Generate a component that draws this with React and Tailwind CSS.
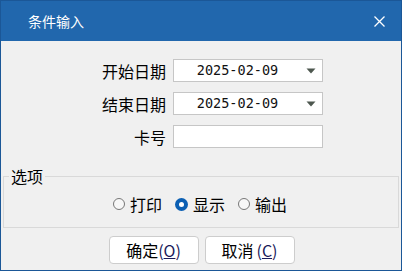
import React, { useState } from "react";

const cjk = { fontFamily: '"Noto Sans CJK SC", "Noto Sans", sans-serif' };
const mono = { fontFamily: '"DejaVu Sans Mono", "Liberation Mono", monospace' };

const Combo = ({ value }) => (
  <div className="flex h-[23px] w-[150px] items-center border border-[#c6c6c6] bg-white">
    <span className="flex-1 pl-[1px] text-center text-[13.5px] text-[#111]" style={mono}>
      {value}
    </span>
    <span className="flex w-[22px] items-center justify-center">
      <svg width="10" height="6" viewBox="0 0 10 6">
        <path d="M0.5 0.5 H9.5 L5 5.5 Z" fill="#4d574f" />
      </svg>
    </span>
  </div>
);

const Radio = ({ checked, label, onClick }) => (
  <label className="flex cursor-pointer items-center gap-[5px]" onClick={onClick}>
    {checked ? (
      <span className="flex h-[13px] w-[13px] items-center justify-center rounded-full bg-[#0b5fb3]">
        <span className="h-[5px] w-[5px] rounded-full bg-white" />
      </span>
    ) : (
      <span className="h-[12px] w-[12px] rounded-full border border-[#777] bg-[#f7f7f7]" />
    )}
    <span className="text-[16px] leading-[20px] text-black">{label}</span>
  </label>
);

const Field = ({ label, children }) => (
  <div className="flex items-center">
    <span className="w-[166px] pr-[1px] text-right text-[16px] leading-[20px] text-black">{label}</span>
    <span className="ml-[6px]">{children}</span>
  </div>
);

export default function App() {
  const [mode, setMode] = useState("show");

  return (
    <div className="flex h-[271px] w-[402px] flex-col border border-[#1b5797] bg-[#f0f0f0]" style={cjk}>
      <div className="flex h-[40px] shrink-0 items-center justify-between bg-[#2167ad] pl-[27px] pr-[16px]">
        <span className="text-[14px] text-white">条件输入</span>
        <svg width="11" height="11" viewBox="0 0 11 11">
          <path d="M0.5 0.5 L10.5 10.5 M10.5 0.5 L0.5 10.5" stroke="#fff" strokeWidth="1.3" />
        </svg>
      </div>

      <div className="flex flex-1 flex-col">
        <div className="flex flex-col gap-[10px] pt-[18px]">
          <Field label="开始日期">
            <Combo value="2025-02-09" />
          </Field>
          <Field label="结束日期">
            <Combo value="2025-02-09" />
          </Field>
          <Field label="卡号">
            <div className="h-[23px] w-[150px] border border-[#c6c6c6] bg-white" />
          </Field>
        </div>

        <fieldset className="mx-[2px] mt-[19px] h-[61px] border border-[#d9d9d9] px-0">
          <legend className="ml-[5px] px-[2px] text-[16px] leading-[18px] text-black">选项</legend>
          <div className="flex items-center justify-center gap-[13px] pt-[9px] pr-[2px]">
            <Radio label="打印" checked={mode === "print"} onClick={() => setMode("print")} />
            <Radio label="显示" checked={mode === "show"} onClick={() => setMode("show")} />
            <Radio label="输出" checked={mode === "export"} onClick={() => setMode("export")} />
          </div>
        </fieldset>

        <div className="mt-[8px] flex justify-center gap-[6px] pl-[1px]">
          <button className="flex h-[28px] w-[90px] items-center justify-center rounded-[4px] border border-[#cdcdcd] bg-white text-[16px] text-black">
            确定<span className="text-[#1a1a5a]">(<span className="underline">O</span>)</span>
          </button>
          <button className="flex h-[28px] w-[90px] items-center justify-center rounded-[4px] border border-[#cdcdcd] bg-white text-[16px] text-black">
            取消<span className="ml-[3px] text-[#1a1a5a]">(<span className="underline">C</span>)</span>
          </button>
        </div>
      </div>
    </div>
  );
}
